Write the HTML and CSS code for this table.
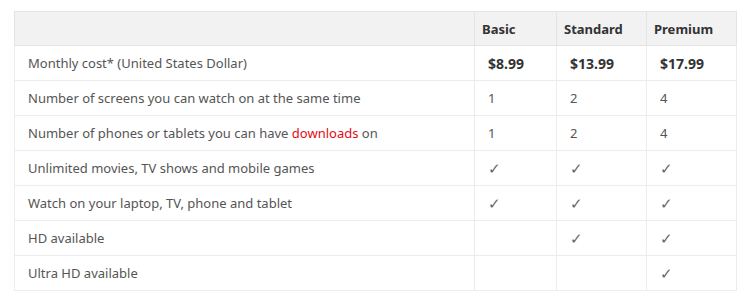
FILE: index.html
```html
<!DOCTYPE html>
<html>
<head>
<meta charset="utf-8">
<link rel="stylesheet" href="styles.css">
</head>
<body>
<table class="plans">
  <colgroup>
    <col class="c-feature"><col class="c-basic"><col class="c-standard"><col class="c-premium">
  </colgroup>
  <thead>
    <tr><th></th><th>Basic</th><th>Standard</th><th>Premium</th></tr>
  </thead>
  <tbody>
    <tr><td>Monthly cost* (United States Dollar)</td><td class="price">$8.99</td><td class="price">$13.99</td><td class="price">$17.99</td></tr>
    <tr><td>Number of screens you can watch on at the same time</td><td>1</td><td>2</td><td>4</td></tr>
    <tr><td>Number of phones or tablets you can have <a href="#">downloads</a> on</td><td>1</td><td>2</td><td>4</td></tr>
    <tr><td>Unlimited movies, TV shows and mobile games</td><td class="chk">✓</td><td class="chk">✓</td><td class="chk">✓</td></tr>
    <tr><td>Watch on your laptop, TV, phone and tablet</td><td class="chk">✓</td><td class="chk">✓</td><td class="chk">✓</td></tr>
    <tr><td>HD available</td><td></td><td class="chk">✓</td><td class="chk">✓</td></tr>
    <tr><td>Ultra HD available</td><td></td><td></td><td class="chk">✓</td></tr>
  </tbody>
</table>
</body>
</html>
```
FILE: styles.css
```css
html, body { background: #fff; }
body {
  margin: 0;
  padding: 11px 0 0 14px;
  font-family: "Noto Sans", "Liberation Sans", sans-serif;
  font-size: 13px;
  color: #555;
}
.plans {
  border-collapse: collapse;
  table-layout: fixed;
  width: 722px;
  border: 1px solid #e6e6e6;
  border-bottom-color: #d6d6d6;
}
.c-feature { width: 460px; }
.c-basic { width: 82px; }
.c-standard { width: 90px; }
.c-premium { width: 90px; }
.plans th, .plans td {
  border: 1px solid #ececec;
  text-align: left;
  padding: 0 13px;
  height: 34px;
  white-space: nowrap;
}
.plans th {
  background: #f2f2f2;
  border-color: #e4e4e4;
  font-weight: 700;
  color: #333;
  padding: 0 7px;
  height: 33px;
}
.plans td.price { font-weight: 700; color: #333; padding-left: 13px; font-size: 14px; }
.plans td.chk { color: #666; font-size: 15px; }
.plans a { color: #e50914; text-decoration: none; }
```
